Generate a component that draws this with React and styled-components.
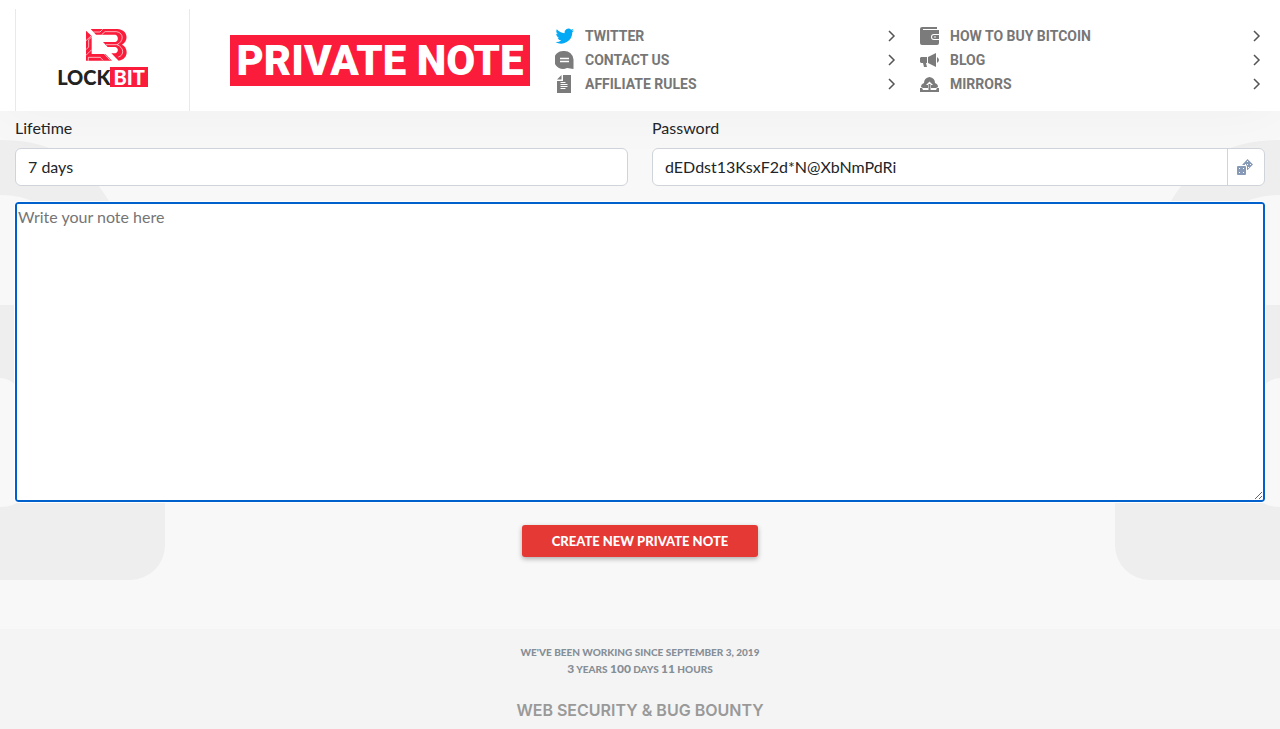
import React from "react";
import styled, { createGlobalStyle } from "styled-components";

const GlobalStyle = createGlobalStyle`
  *, *::before, *::after { box-sizing: border-box; }
  body {
    margin: 0;
    background: #f8f8f8;
    color: #212529;
    font: 16px/24px Lato, "Open Sans", sans-serif;
  }
  #root { min-height: 100vh; display: flex; flex-direction: column; }
`;

const Header = styled.header`
  display: flex;
  background: #fff;
  padding: 9px 15px 0;
  box-shadow: 0 0 60px rgba(0, 0, 0, 0.04);
`;

const LogoLink = styled.a`
  flex: none;
  width: 175px;
  height: 102px;
  padding-top: 20px;
  display: flex;
  flex-direction: column;
  align-items: center;
  gap: 6px;
  border: solid #e9e9e9;
  border-width: 0 1px;
  text-decoration: none;
`;

const EmblemArt = styled.svg`
  margin-left: 8px;
`;

const Wordmark = styled.span`
  display: flex;
  color: #222;
  font: 900 20px/20px Lato, sans-serif;
`;

const WordmarkTag = styled.span`
  background: #fa1c3a;
  color: #fff;
  padding: 0 3px;
`;

const Title = styled.h1`
  flex: none;
  width: 300px;
  height: 51px;
  margin: 26px 25px 0 40px;
  background: #fa1c3a;
  color: #fff;
  font: 900 42px/51px Roboto, sans-serif;
  text-align: center;
  white-space: nowrap;
`;

const Nav = styled.nav`
  flex: 1;
  display: grid;
  grid-template-columns: 1fr 1fr;
  column-gap: 20px;
  padding-top: 15px;
`;

const NavList = styled.ul`
  list-style: none;
  margin: 0;
  padding: 0;
`;

const NavLink = styled.a`
  display: flex;
  align-items: center;
  gap: 10px;
  height: 24px;
  padding-right: 4px;
  color: #777;
  font: 700 14px/24px Roboto, sans-serif;
  text-decoration: none;
  svg { flex: none; }
`;

const NavText = styled.span`
  flex: 1;
`;

const Main = styled.main`
  position: relative;
  padding: 5px 15px 72px;
  flex: 1;
`;

const Backdrop = styled.svg`
  position: absolute;
  z-index: -1;
  top: 29px;
  ${(p) => (p.$flip ? "right: 0; transform: scaleX(-1);" : "left: 0;")}
`;

const Form = styled.form`
  display: grid;
  grid-template-columns: 1fr 1fr;
  column-gap: 24px;
  row-gap: 16px;
`;

const Field = styled.div`
  min-width: 0;
`;

const Label = styled.label`
  display: block;
  margin-bottom: 8px;
`;

const Select = styled.select`
  appearance: none;
  display: block;
  width: 100%;
  height: 38px;
  padding: 0 12px;
  border: 1px solid #ced4da;
  border-radius: 6px;
  background: #fff;
  color: inherit;
  font: inherit;
`;

const InputGroup = styled.div`
  display: flex;
  height: 38px;
  border: 1px solid #ced4da;
  border-radius: 6px;
  background: #fff;
  overflow: hidden;
`;

const Input = styled.input`
  flex: 1;
  min-width: 0;
  padding: 0 12px;
  border: 0;
  outline: 0;
  color: inherit;
  background: none;
  font: inherit;
`;

const DiceButton = styled.button`
  width: 37px;
  padding: 0 0 0 8px;
  border: 0;
  border-left: 1px solid #ced4da;
  background: none;
  svg { display: block; }
`;

const NoteArea = styled.textarea`
  grid-column: 1 / -1;
  display: block;
  width: 100%;
  height: 300px;
  padding: 1px;
  border: 2px solid #0060cc;
  border-radius: 3px;
  outline: 1px solid #fff;
  background: #fff;
  font: inherit;
  resize: both;
  &::placeholder { color: #757575; }
`;

const SubmitButton = styled.button`
  grid-column: 1 / -1;
  justify-self: center;
  width: 236px;
  height: 32px;
  margin-top: 7px;
  padding: 0;
  border: 0;
  border-radius: 3px;
  background: #e53935;
  box-shadow: 0 2px 5px rgba(0, 0, 0, 0.3);
  color: #fff;
  font: 900 13px/30px Lato, sans-serif;
`;

const Footer = styled.footer`
  padding: 15px 15px 8px;
  background: #f4f4f4;
  text-align: center;
`;

const Since = styled.p`
  margin: 0;
  color: #868e96;
  font: 900 10px/16px Lato, sans-serif;
`;

const Uptime = styled(Since)`
  line-height: 18px;
  b { font-size: 12px; }
`;

const FooterTitle = styled.h2`
  margin: 20px 0 0;
  font: 600 16px/24px Inter, sans-serif;
`;

const FooterLink = styled.a`
  color: #999;
  text-decoration: none;
`;

function Emblem() {
  return (
    <EmblemArt width="42" height="32" viewBox="0 0 126 96" aria-hidden="true">
      <path fill="#fa1c3a" d="M14 0H94C128 2 128 38 108 47C128 56 128 91 98 95L76 73H88C98 70 98 56 88 54H65L51 39H88C98 37 98 20 88 17H30ZM0 5L17 21V75H58L78 95H0Z" />
      <path fill="none" stroke="#fff" strokeWidth="2" d="M22 9H42L50 1M47 17L57 8H91C115 11 113 38 93 47H60M93 47C115 56 115 79 97 84M0 35L17 19M0 62L8 54V32L17 24M0 79L17 62M7 95V85H43L51 94M55 75L73 94" />
    </EmblemArt>
  );
}

function Icon({ name }) {
  const art = {
    twitter: <path fill="#03a9f4" d="M19 4.200c-.6.3-1.300.5-2 .6.700-.5 1.300-1.200 1.600-2-.7.400-1.500.7-2.400.900A4 4 0 0 0 9.500 7.200 11 11 0 0 1 1.800 3.300 4 4 0 0 0 3 8.300c-.6 0-1.200-.2-1.800-.5 0 1.900 1.300 3.500 3.100 3.900-.6.1-1.100.1-1.700 0a4 4 0 0 0 3.600 2.700A8 8 0 0 1 .4 16 11.200 11.200 0 0 0 17.300 6.200c.7-.5 1.300-1.200 1.700-2Z" />,
    contact: <><path d="M9 1a9 9 0 1 0 3 17l6.500 1V9.500A9 9 0 0 0 9 1Z" /><path stroke="#fff" strokeWidth="1.500" d="M5 8.500h9M5 11.500h9" /></>,
    rules: <><path d="M8 1h8v18H2V7h6ZM2 5.500 6.500 1v4.500Z" /><path stroke="#fff" strokeWidth="1" d="M5.500 8.500h5M5.500 10.500h7M5.500 12.500h7M5.500 14.500h5" /></>,
    wallet: <><path d="M2 1h15v2H3v1h16v4h-5a3 3 0 0 0 0 6h5v3a2 2 0 0 1-2 2H2a2 2 0 0 1-2-2V3a2 2 0 0 1 2-2Z" /><path d="M14 9h5v4h-5a2 2 0 0 1 0-4Z" /><circle cx="15" cy="11" r=".8" fill="#fff" /></>,
    blog: <path d="M1 7h6v6H6l1 4H4l-1-4H1l-1-1V8ZM8 7l8-4v14l-8-4ZM17 7q4 3 0 6Z" />,
    mirrors: <><path d="M1 13q0-3 3-4 0-5 5.500-6Q15 4 15 9q3 1 3 4l-2 1h-5v-3h2L9.500 7.500 6 11h2v3H3ZM0 14h2l1 2h13l1-2h2v4H0Z" /><path d="M8.500 10h2v7h-2Z" /></>,
  };
  return (
    <svg width="20" height="20" viewBox="0 0 20 20" fill="#7b7b7b" aria-hidden="true">
      {art[name]}
    </svg>
  );
}

function Chevron() {
  return (
    <svg width="8" height="12" viewBox="0 0 8 12" fill="none" stroke="#555" strokeWidth="1.500" aria-hidden="true">
      <path d="M1 1l5 5-5 5" />
    </svg>
  );
}

function Dice() {
  return (
    <svg width="18" height="18" viewBox="0 0 18 18" fill="#869ab8" aria-hidden="true">
      <rect x="1" y="8" width="9" height="9" rx="1" />
      <path d="M11.500 1 17 6.500 11.500 12H11V8L10 7H6Z" />
      <path fill="#fff" d="M3 10h1v1H3ZM7 10h1v1H7ZM3 14h1v1H3ZM7 14h1v1H7ZM11 3h1v1h-1ZM9 6h1v1H9ZM11 6h1v1h-1ZM14 6h1v1h-1ZM12 9h1v1h-1Z" />
    </svg>
  );
}

function Decoration({ flip }) {
  return (
    <Backdrop $flip={flip} width="166" height="440" viewBox="0 0 166 440" fill="#eee" aria-hidden="true">
      <path d="M0 0C43 0 80 13 109 61L130 110L130 220L60 180V90Q45 55 0 55Z" />
      <path d="M0 165H130V300H40Q25 238 0 238Z" />
      <path d="M0 367Q30 367 35 330H165V405A35 35 0 0 1 130 440H0Z" />
    </Backdrop>
  );
}

const groups = [
  [["twitter", "TWITTER"], ["contact", "CONTACT US"], ["rules", "AFFILIATE RULES"]],
  [["wallet", "HOW TO BUY BITCOIN"], ["blog", "BLOG"], ["mirrors", "MIRRORS"]],
];

export default function App() {
  return (
    <>
      <GlobalStyle />
      <Header>
        <LogoLink href="#">
          <Emblem />
          <Wordmark>LOCK<WordmarkTag>BIT</WordmarkTag></Wordmark>
        </LogoLink>
        <Title>PRIVATE NOTE</Title>
        <Nav>
          {groups.map((items) => (
            <NavList key={items[0][0]}>
              {items.map(([icon, text]) => (
                <li key={icon}>
                  <NavLink href="#">
                    <Icon name={icon} />
                    <NavText>{text}</NavText>
                    <Chevron />
                  </NavLink>
                </li>
              ))}
            </NavList>
          ))}
        </Nav>
      </Header>
      <Main>
        <Decoration />
        <Decoration flip />
        <Form onSubmit={(e) => e.preventDefault()}>
          <Field>
            <Label htmlFor="lifetime">Lifetime</Label>
            <Select id="lifetime"><option>7 days</option></Select>
          </Field>
          <Field>
            <Label htmlFor="password">Password</Label>
            <InputGroup>
              <Input id="password" defaultValue="dEDdst13KsxF2d*N@XbNmPdRi" />
              <DiceButton type="button" aria-label="Generate password"><Dice /></DiceButton>
            </InputGroup>
          </Field>
          <NoteArea aria-label="Note" placeholder="Write your note here" />
          <SubmitButton type="submit">CREATE NEW PRIVATE NOTE</SubmitButton>
        </Form>
      </Main>
      <Footer>
        <Since>WE'VE BEEN WORKING SINCE SEPTEMBER 3, 2019</Since>
        <Uptime><b>3</b> YEARS <b>100</b> DAYS <b>11</b> HOURS</Uptime>
        <FooterTitle><FooterLink href="#">WEB SECURITY &amp; BUG BOUNTY</FooterLink></FooterTitle>
      </Footer>
    </>
  );
}
